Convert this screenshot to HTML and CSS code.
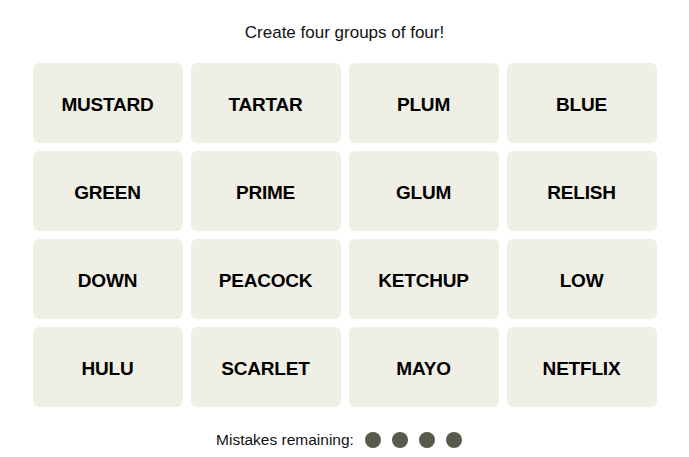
FILE: index.html
```html
<!DOCTYPE html>
<html lang="en">
<head>
    <meta charset="UTF-8">
    <meta name="viewport" content="width=device-width, initial-scale=1.0">
    <title>Connections</title>
    <link rel="stylesheet" href="styles.css">
</head>
<body>
<main class="game">
    <p class="prompt">Create four groups of four!</p>

    <div class="board">
        <button class="tile">MUSTARD</button>
        <button class="tile">TARTAR</button>
        <button class="tile">PLUM</button>
        <button class="tile">BLUE</button>
        <button class="tile">GREEN</button>
        <button class="tile">PRIME</button>
        <button class="tile">GLUM</button>
        <button class="tile">RELISH</button>
        <button class="tile">DOWN</button>
        <button class="tile">PEACOCK</button>
        <button class="tile">KETCHUP</button>
        <button class="tile">LOW</button>
        <button class="tile">HULU</button>
        <button class="tile">SCARLET</button>
        <button class="tile">MAYO</button>
        <button class="tile">NETFLIX</button>
    </div>

    <div class="mistakes">
        <span>Mistakes remaining:</span>
        <span class="dots">
            <span class="dot"></span>
            <span class="dot"></span>
            <span class="dot"></span>
            <span class="dot"></span>
        </span>
    </div>
</main>
</body>
</html>
```

FILE: styles.css
```css
body {
    margin: 0;
    background: #fff;
    font-family: "Liberation Sans", Arial, sans-serif;
    color: #121212;
}

.game {
    display: flex;
    flex-direction: column;
    align-items: center;
    padding-top: 23px;
}

.prompt {
    margin: 0;
    font-size: 17px;
    line-height: 20px;
}

.board {
    display: grid;
    grid-template-columns: repeat(4, 150px);
    grid-auto-rows: 80px;
    gap: 8px;
    margin-top: 20px;
}

.tile {
    border: none;
    border-radius: 6px;
    padding: 3px 0 0;
    background: #efefe6;
    font-family: inherit;
    font-size: 19px;
    font-weight: bold;
    letter-spacing: -0.2px;
    color: #000;
    cursor: pointer;
}

.mistakes {
    display: flex;
    align-items: center;
    margin-top: 21px;
    padding-right: 11px;
    height: 24px;
    font-size: 15.5px;
}

.dots {
    display: flex;
    gap: 11px;
    margin-left: 11px;
}

.dot {
    width: 16px;
    height: 16px;
    border-radius: 50%;
    background: #5a594e;
}
```
